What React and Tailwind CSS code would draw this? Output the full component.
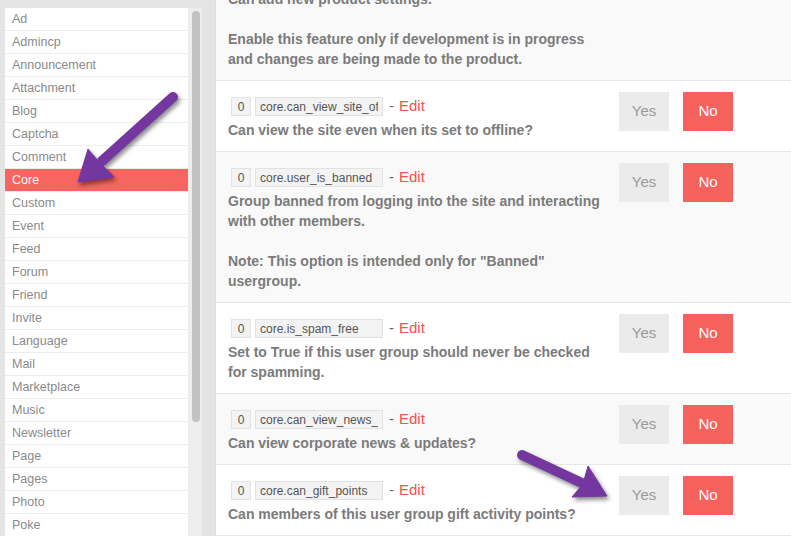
import React from 'react';

const modules = [
    'Ad', 'Admincp', 'Announcement', 'Attachment', 'Blog', 'Captcha', 'Comment', 'Core',
    'Custom', 'Event', 'Feed', 'Forum', 'Friend', 'Invite', 'Language', 'Mail',
    'Marketplace', 'Music', 'Newsletter', 'Page', 'Pages', 'Photo', 'Poke', 'Poll',
];

const settings = [
    {
        key: 'core.can_add_product',
        lines: ['Can add new product settings.', '', 'Enable this feature only if development is in progress', 'and changes are being made to the product.'],
    },
    { key: 'core.can_view_site_offline', lines: ['Can view the site even when its set to offline?'] },
    {
        key: 'core.user_is_banned',
        lines: ['Group banned from logging into the site and interacting', 'with other members.', '', 'Note: This option is intended only for "Banned"', 'usergroup.'],
    },
    { key: 'core.is_spam_free', lines: ['Set to True if this user group should never be checked', 'for spamming.'] },
    { key: 'core.can_view_news_updates', lines: ['Can view corporate news & updates?'] },
    { key: 'core.can_gift_points', lines: ['Can members of this user group gift activity points?'] },
];

const SettingRow = ({ setting, odd }) => (
    <div className={`flex border-b border-[#e6e6e6] ${odd ? 'bg-white' : 'bg-[#f9f9f9]'}`}>
        <div className="flex-1 min-w-0 pl-[12px] pt-[16px] pb-[11px]">
            <div className="flex items-center h-[19px] ml-[3px]">
                <span className="w-[20px] h-[19px] flex items-center justify-center bg-[#f3f3f3] border border-[#e2e2e2] text-[12px] text-[#555]">
                    0
                </span>
                <span className="ml-[4px] w-[128px] h-[19px] flex items-center px-[4px] bg-[#f3f3f3] border border-[#e2e2e2] text-[12px] text-[#555] overflow-hidden whitespace-nowrap">
                    <span className="block w-[118px] overflow-hidden">{setting.key}</span>
                </span>
                <span className="ml-[6px] text-[15px] text-[#666]">-</span>
                <span className="ml-[5px] text-[15px] text-[#f0524f]">Edit</span>
            </div>
            <div className="mt-[4px] text-[14px] leading-[20px] font-bold text-[#7b7b7b]">
                {setting.lines.map((l, i) => (
                    <div key={i} className="h-[20px] whitespace-nowrap">{l}</div>
                ))}
            </div>
        </div>
        <div className="shrink-0 flex gap-[14px] pt-[11px] pr-[58px]">
            <button className="w-[50px] h-[39px] bg-[#ebebeb] text-[15px] text-[#9a9a9a]">Yes</button>
            <button className="w-[50px] h-[39px] bg-[#f5625d] text-[15px] text-white">No</button>
        </div>
    </div>
);

const App = () => {
    return (
        <div className="relative w-[791px] h-[536px] overflow-hidden bg-[#e4e4e4] flex" style={{ fontFamily: '"Liberation Sans", Arial, sans-serif' }}>
            <div className="pl-[5px] pt-[8px] flex shrink-0">
                <div className="w-[183px] bg-white">
                    {modules.map(m => (
                        <div
                            key={m}
                            className={`h-[23px] flex items-center pl-[7px] border-b border-[#ececec] text-[12.5px] ${m === 'Core' ? 'bg-[#f6655f] text-white' : 'text-[#8a8a8a]'}`}
                        >
                            {m}
                        </div>
                    ))}
                </div>
                <div className="w-[14px] bg-[#ededed] pt-[3px] pl-[4px]">
                    <div className="w-[8px] h-[411px] rounded-full bg-[#c2c2c2]" />
                </div>
            </div>
            <div className="ml-[13px] flex-1 min-w-0 border-l border-[#dcdcdc]">
                <div className="mt-[-50px]">
                    {settings.map((s, i) => (
                        <SettingRow key={s.key} setting={s} odd={i % 2 === 1} />
                    ))}
                </div>
            </div>

            <svg className="absolute inset-0 pointer-events-none" width="791" height="536" style={{ filter: 'drop-shadow(2px 3px 2px rgba(0,0,0,0.45))' }}>
                <g fill="#7437a0" stroke="#7437a0">
                    <line x1="173" y1="97" x2="102" y2="161" strokeWidth="10" strokeLinecap="round" />
                    <polygon points="78,182 88,149 100,163 114,177" strokeWidth="1" strokeLinejoin="round" />
                    <line x1="522" y1="455" x2="584" y2="484" strokeWidth="10" strokeLinecap="round" />
                    <polygon points="607,496 588,466 583,484 572,497" strokeWidth="1" strokeLinejoin="round" />
                </g>
            </svg>
        </div>
    );
};

export default App;
